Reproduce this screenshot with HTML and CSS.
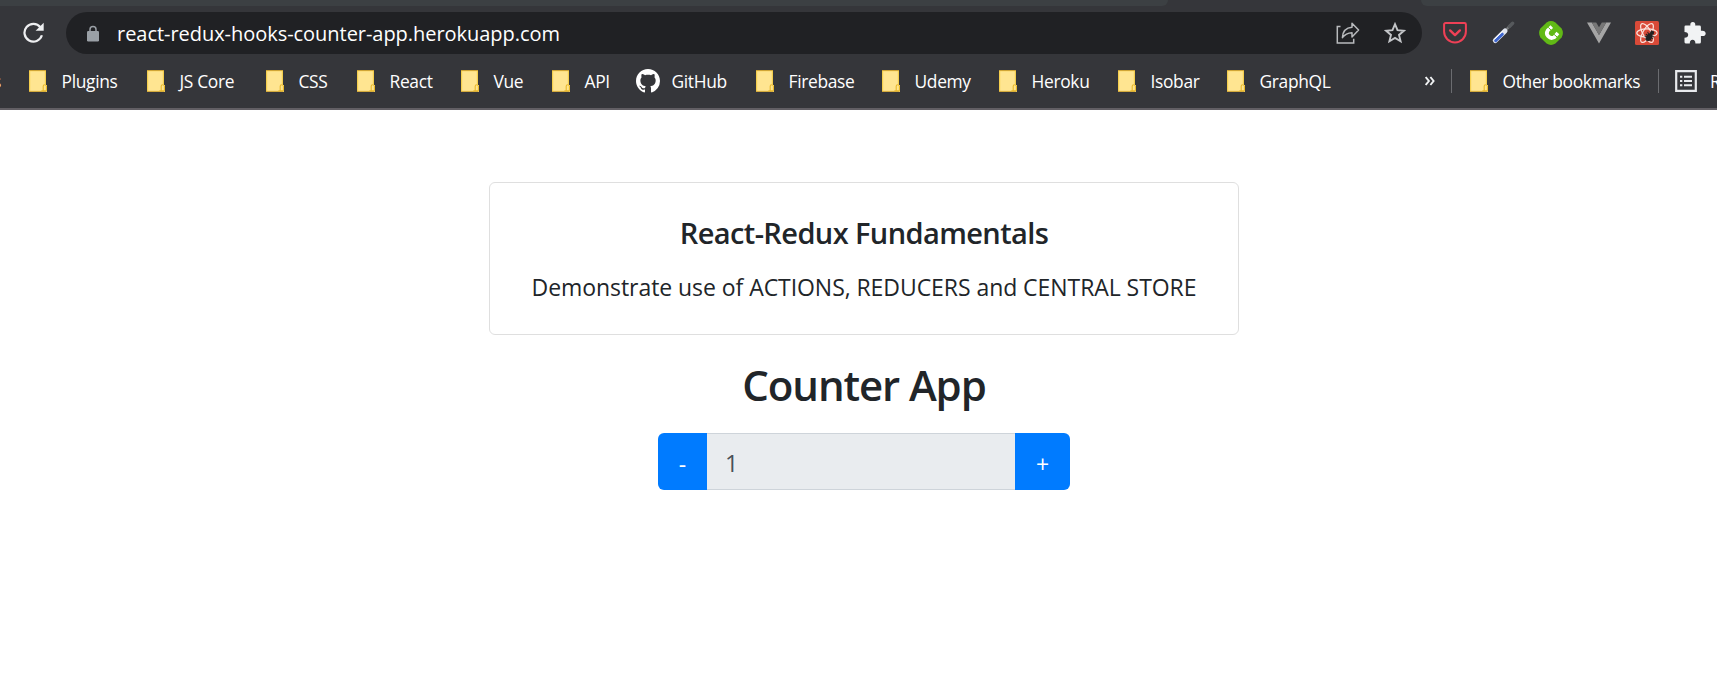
FILE: index.html
```html
<!DOCTYPE html>
<html lang="en">
<head>
<meta charset="utf-8">
<title>React-Redux Counter App</title>
<link rel="stylesheet" href="styles.css">
</head>
<body>
<svg class="defs" width="0" height="0">
  <symbol id="folder" viewBox="0 0 18 22">
    <path d="M0 .5h17V15h1v7H0z" fill="#ffe591"/>
    <path d="M.6 21.4V.7H16.4V14.6" fill="none" stroke="#f5cf4e" stroke-width="1.2"/>
    <path d="M0 .5h17M0 21.4h17.5" fill="none" stroke="#d0a536" stroke-width="1"/>
    <path d="M14.2 20.8v-4.5q0-1.6 1.4-1.6t1.8 1.4v4.7h-5" fill="none" stroke="#e9b92b" stroke-width="1.1"/>
  </symbol>
</svg>
<header class="browser">
  <div class="tabs"><div class="tab tab-left"></div><div class="tab tab-right"></div></div>
  <div class="toolbar">
    <svg class="reload" width="22" height="22" viewBox="0 0 22 22"><path d="M18.9 13.3A8.9 8.9 0 1 1 17.4 5.2" fill="none" stroke="#eeeff1" stroke-width="2.2"/><path d="M20.7.7v8.1h-8.1z" fill="#eeeff1"/></svg>
    <div class="omnibox">
      <svg width="12" height="17" viewBox="0 0 12 17"><path d="M3 7V4.4a3 3 0 0 1 6 0V7" fill="none" stroke="#9aa0a6" stroke-width="1.5"/><rect y="6" width="12" height="10.5" rx="1.2" fill="#9aa0a6"/></svg>
      <span class="url">react-redux-hooks-counter-app.herokuapp.com</span>
      <svg class="share" width="24" height="24" viewBox="0 0 24 24" fill="none" stroke="#b8babd" stroke-width="1.5"><path d="M4.5 5.5H1.3v16.4h16.4v-4.1"/><path d="M6.4 16.6C6.7 10.7 10 6.8 16 6.3V2.2l6.6 6.9-6.6 6.8v-4.2c-4.2.1-7.1 1.4-9.6 4.9z" stroke-linejoin="round"/></svg>
      <svg class="star" width="22" height="22" viewBox="0 0 22 22"><path d="m11 2.2 2.5 6 6.5.5-5 4.2 1.6 6.4-5.6-3.4-5.6 3.4L7 12.9 2 8.7l6.5-.5z" fill="none" stroke="#c3c5c8" stroke-width="1.9"/></svg>
    </div>
    <div class="extensions">
      <svg width="24" height="24" viewBox="0 0 24 24" fill="none" stroke="#ef4056" stroke-width="2" stroke-linecap="round" stroke-linejoin="round"><path d="M2.5 2h19a1.4 1.4 0 0 1 1.4 1.4V10.5a10.9 10.9 0 0 1-21.8 0V3.4A1.4 1.4 0 0 1 2.5 2z"/><path d="m7.1 9.4 4.9 4.7 4.9-4.7" stroke-width="2.4"/></svg>
      <svg width="24" height="24" viewBox="0 0 24 24" stroke-linecap="round"><path d="m14.5 9.4 5.2-5.2" stroke="#777a7c" stroke-width="2.4"/><path d="m18.4 5.5 3.2-3.3" stroke="#56595c" stroke-width="3.4"/><path d="M4.3 19.5 14 10" stroke="#e1e5ee" stroke-width="5"/><path d="m4.7 19.6 6.6-6.4" stroke="#3e66cf" stroke-width="3"/><path d="m3.7 18.2 8.4-8.1" stroke="#fff" stroke-width="1"/></svg>
      <svg width="24" height="24" viewBox="0 0 24 24"><path d="M7.6 1.4Q12-1.2 16.4 1.4L22.6 7.6Q25.2 12 22.6 16.4L16.4 22.6Q12 25.2 7.6 22.6L1.4 16.4Q-1.2 12 1.4 7.6z" fill="#61b916"/><path d="M12.8 5.7 8.7 9.4A4.9 4.9 0 0 0 15 16.4L18.9 12" fill="none" stroke="#fff" stroke-width="3.7"/><path d="m9.3 6.3 3.4 3.6M14.2 12.6l4 3.5" stroke="#61b916" stroke-width="1"/></svg>
      <svg width="24" height="24" viewBox="0 0 24 24"><path d="M0 1.5h4.8L12 14l7.2-12.5H24L12 22.5z" fill="#a5a5a5"/><path d="M4.8 1.5h4.4L12 6.3l2.8-4.8h4.4L12 14z" fill="#777"/></svg>
      <svg width="24" height="24" viewBox="0 0 24 24"><rect width="24" height="24" rx="1.5" fill="#d94a38"/><g fill="none" stroke="#fbe4de" stroke-width="1.2"><ellipse cx="12" cy="12" rx="10.2" ry="4.1"/><ellipse cx="12" cy="12" rx="10.6" ry="4.1" transform="rotate(60 12 12)"/><ellipse cx="12" cy="12" rx="10.6" ry="4.1" transform="rotate(120 12 12)"/></g><g transform="rotate(35 14.5 15.5)" stroke="#222" stroke-width="1"><ellipse cx="14.5" cy="16.3" rx="2.3" ry="4" fill="#222"/><circle cx="14.5" cy="10.9" r="1.5" fill="#222"/><path d="m10.4 12.8 8.2 5.4M18.6 12.8l-8.2 5.4M10 15.6h9"/></g></svg>
      <svg width="24" height="24" viewBox="0 0 24 24"><path d="M1.5 5.7Q1.5 4.500 2.700 4.500H7.400C7 2.300 8 1.100 9.800 1.100S12.700 2.300 12.200 4.500h4.300q1.400 0 1.400 1.400v3.900c3.200-.5 4.800.8 4.800 2.600s-1.500 3-4.800 2.500v6q0 1.500-1.400 1.500h-4.100c0-2.400-1-3.700-2.800-3.700s-2.800 1.300-2.800 3.700H2.700q-1.200 0-1.200-1.300v-4.400c2.400 0 3.700-1.100 3.700-2.900s-1.300-2.900-3.700-2.900z" fill="#f1f3f4"/></svg>
    </div>
  </div>
  <nav class="bookmarks">
    <span class="clipped">s</span>
    <a class="bookmark"><svg><use href="#folder"/></svg>Plugins</a>
    <a class="bookmark"><svg><use href="#folder"/></svg>JS Core</a>
    <a class="bookmark"><svg><use href="#folder"/></svg>CSS</a>
    <a class="bookmark"><svg><use href="#folder"/></svg>React</a>
    <a class="bookmark"><svg><use href="#folder"/></svg>Vue</a>
    <a class="bookmark"><svg><use href="#folder"/></svg>API</a>
    <a class="bookmark github"><svg viewBox="0 0 16 16"><path fill="#fff" d="M8 0C3.58 0 0 3.58 0 8c0 3.54 2.29 6.53 5.47 7.59.4.07.55-.17.55-.38 0-.19-.01-.82-.01-1.49-2.01.37-2.53-.49-2.69-.94-.09-.23-.48-.94-.82-1.13-.28-.15-.68-.52-.01-.53.63-.01 1.08.58 1.23.82.72 1.21 1.87.87 2.33.66.07-.52.28-.87.51-1.07-1.78-.2-3.64-.89-3.64-3.95 0-.87.31-1.59.82-2.15-.08-.2-.36-1.02.08-2.12 0 0 .67-.21 2.2.82.64-.18 1.32-.27 2-.27s1.36.09 2 .27c1.53-1.04 2.2-.82 2.2-.82.44 1.1.16 1.92.08 2.12.51.56.82 1.27.82 2.15 0 3.07-1.87 3.75-3.65 3.95.29.25.54.73.54 1.48 0 1.07-.01 1.93-.01 2.2 0 .21.15.46.55.38A8.01 8.01 0 0 0 16 8c0-4.42-3.58-8-8-8z"/></svg>GitHub</a>
    <a class="bookmark"><svg><use href="#folder"/></svg>Firebase</a>
    <a class="bookmark"><svg><use href="#folder"/></svg>Udemy</a>
    <a class="bookmark"><svg><use href="#folder"/></svg>Heroku</a>
    <a class="bookmark"><svg><use href="#folder"/></svg>Isobar</a>
    <a class="bookmark"><svg><use href="#folder"/></svg>GraphQL</a>
    <svg class="overflow" width="10" height="10" viewBox="0 0 10 10"><path d="m.7 1 3.2 4L.7 9M5.4 1l3.2 4-3.2 4" fill="none" stroke="#f1f3f4" stroke-width="1.9"/></svg>
    <i class="divider"></i>
    <a class="bookmark other"><svg><use href="#folder"/></svg>Other bookmarks</a>
    <i class="divider"></i>
    <a class="bookmark reading"><svg viewBox="0 0 22 22"><path d="M1.2 1.2h19.6v19.6H1.2z" fill="none" stroke="#e8eaed" stroke-width="2.2"/><path d="M5 6.7h2.3M9 6.7h8M5 11h2.3M9 11h8M5 15.3h2.3M9 15.3h8" stroke="#e8eaed" stroke-width="2"/></svg>R</a>
  </nav>
</header>
<main class="page">
  <section class="card">
    <h5 class="card-title">React-Redux Fundamentals</h5>
    <p class="card-text">Demonstrate use of ACTIONS, REDUCERS and CENTRAL STORE</p>
  </section>
  <h2 class="heading">Counter App</h2>
  <div class="input-group">
    <button class="btn minus">-</button>
    <div class="value">1</div>
    <button class="btn plus">+</button>
  </div>
</main>
</body>
</html>
```
FILE: styles.css
```css
* { box-sizing: border-box; }
body {
  margin: 0;
  height: 693px;
  overflow: hidden;
  background: #fff;
  color: #212529;
  font-family: "Open Sans", "Noto Sans", sans-serif;
}
svg { display: block; flex: none; }
.defs { position: absolute; }
.browser {
  height: 110px;
  background: #35363a;
  border-bottom: 2px solid #625f64;
  overflow: hidden;
}
.tabs { display: flex; justify-content: space-between; height: 6px; }
.tab { background: #3c4043; }
.tab-left { width: 1168px; border-bottom-right-radius: 8px; }
.tab-right { width: 296px; border-bottom-left-radius: 8px; }
.toolbar { display: flex; align-items: center; height: 54px; padding-left: 23px; }
.omnibox {
  display: flex;
  align-items: center;
  width: 1356px;
  height: 42px;
  margin-left: 21px;
  padding: 0 16px 0 21px;
  border-radius: 21px;
  background: #202124;
}
.url { margin-left: 18px; color: #fff; font-size: 20px; letter-spacing: -0.04px; white-space: nowrap; }
.share { margin-left: auto; margin-right: 24px; }
.extensions { display: flex; gap: 24px; margin-left: 21px; }
.bookmarks {
  display: grid;
  grid-template-columns: 29px 118px 119px 91px 104px 91px 84px 120px 126px 117px 119px 109px 198px 26px 19px 188px 17px 60px;
  align-items: center;
  height: 42px;
  padding-bottom: 1px;
  color: #fff;
  font-size: 17.4px;
}
.clipped { width: 9px; margin-left: -7px; }
.bookmark { display: flex; align-items: center; gap: 14.5px; line-height: 20px; white-space: nowrap; letter-spacing: -0.33px; }
.bookmark svg { width: 18px; height: 22px; }
.bookmark.github { gap: 11.5px; }
.bookmark.github svg { width: 24px; height: 24px; }
.bookmark.reading { gap: 13px; }
.bookmark.reading svg { width: 22px; height: 22px; }
.divider { width: 1px; height: 24px; background: #6b6c70; }
.page { display: flex; flex-direction: column; align-items: center; padding: 72px 0 0 11px; }
.card {
  width: 750px;
  height: 153px;
  padding: 30px;
  border: 1px solid #dfdfdf;
  border-radius: 6px;
  text-align: center;
  white-space: nowrap;
}
.card-title { margin: 2px 0 0; font-size: 29px; font-weight: 600; line-height: 36px; letter-spacing: -0.6px; }
.card-text { margin: 18px 0 0; font-size: 23px; line-height: 36px; letter-spacing: -0.06px; }
.heading { margin: 25px 0 0; font-size: 42px; line-height: 50px; font-weight: 600; letter-spacing: -1.1px; }
.input-group { display: flex; width: 412px; height: 57px; margin-top: 23px; }
.btn { border: 0; background: #007bff; color: #fff; font: 23px "Open Sans", sans-serif; padding: 4px 0 0; }
.minus { width: 49px; border-radius: 6px 0 0 6px; }
.plus { width: 55px; border-radius: 0 6px 6px 0; }
.value {
  flex: 1;
  padding-left: 18px;
  border: 1px solid #ced4da;
  border-width: 1px 0;
  background: #e9ecef;
  color: #495057;
  font-size: 23.5px;
  line-height: 58px;
}
```
